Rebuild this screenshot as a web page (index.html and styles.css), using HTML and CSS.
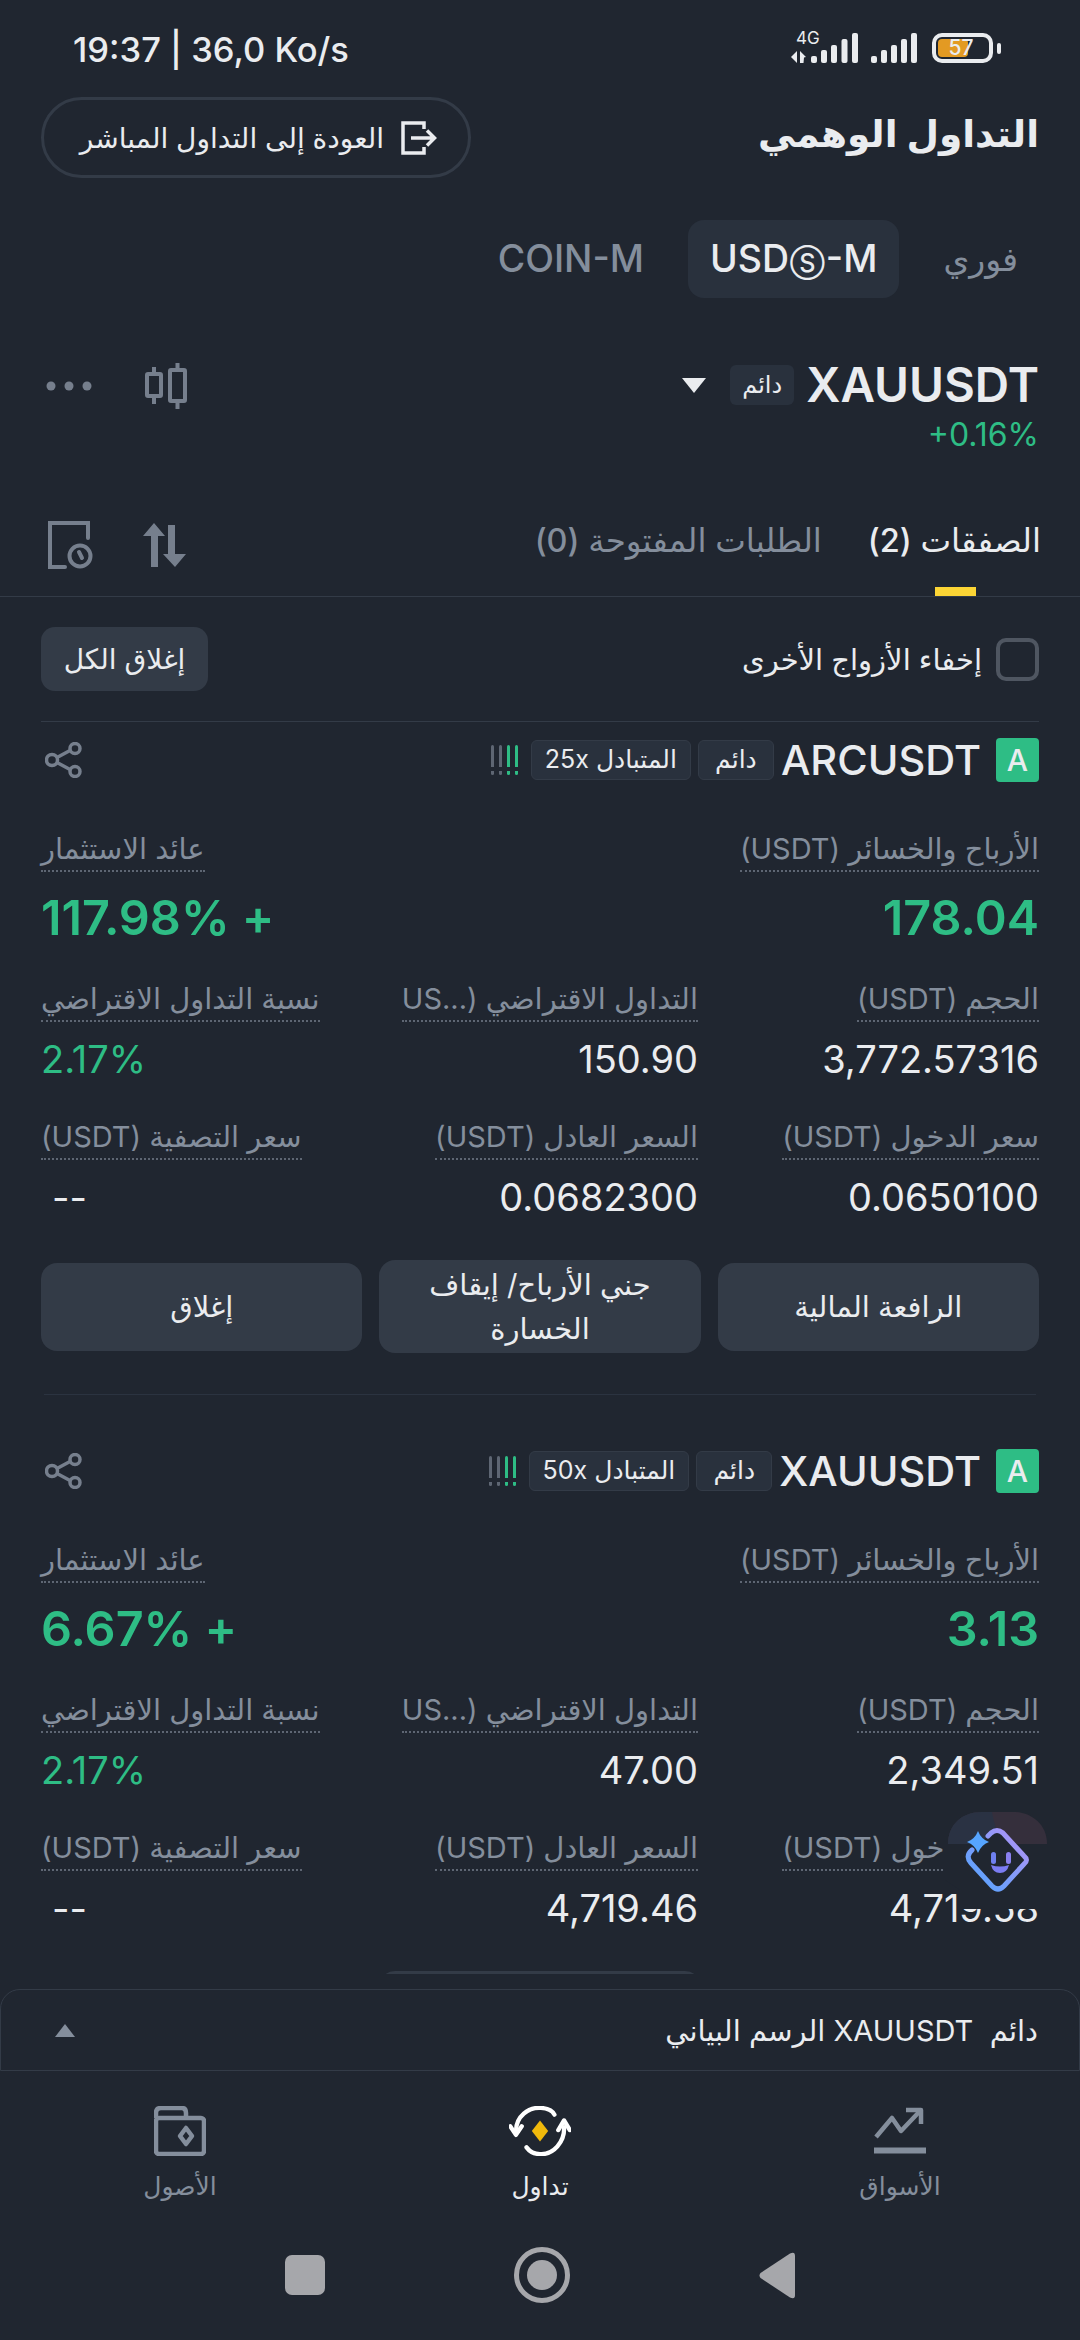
FILE: index.html
```html
<!DOCTYPE html>
<html lang="ar" dir="rtl">
<head>
<meta charset="utf-8">
<title>التداول الوهمي</title>
<link rel="stylesheet" href="styles.css">
</head>
<body>
<div class="page">
  <div class="status" dir="ltr">
    <span class="clock">19:37 | 36,0 Ko/s</span>
    <div class="status-icons">
      <div class="net">
        <span class="net-label">4G</span>
        <svg class="arrows" width="15" height="12" viewBox="0 0 15 12"><path d="M6 0v12L0 6z" fill="#eaecef"/><path d="M9 0l6 6-2 .5-.5 5.500H9z" fill="#eaecef"/></svg>
      </div>
      <svg class="bars" width="47" height="30" viewBox="0 0 47 30"><g fill="#eaecef"><rect x="0" y="23" width="6" height="7" rx="2"/><rect x="10" y="17" width="6" height="13" rx="2"/><rect x="20" y="12" width="6" height="18" rx="2"/><rect x="30.500" y="6" width="6" height="24" rx="2"/><rect x="41" y="0" width="6" height="30" rx="2"/></g></svg>
      <svg class="bars second" width="46" height="30" viewBox="0 0 46 30"><g fill="#eaecef"><rect x="0" y="23" width="6" height="7" rx="2"/><rect x="10" y="17" width="6" height="13" rx="2"/><rect x="20" y="12" width="6" height="18" rx="2"/><rect x="30" y="6" width="6" height="24" rx="2"/><rect x="40" y="0" width="6" height="30" rx="2"/></g></svg>
      <div class="battery">
        <span class="battery-fill"></span>
        <span class="battery-num">57</span>
      </div>
      <span class="battery-tip"></span>
    </div>
  </div>

  <header class="header">
    <h1 class="title">التداول الوهمي</h1>
    <button class="back">
      <svg width="38" height="34" viewBox="0 0 38 34" fill="none" stroke="#eaecef" stroke-width="3.500"><path d="M24 8V2H3v30h21v-6"/><path d="M11 17h23M27 9.500l7.500 7.500-7.500 7.500"/></svg>
      <span>العودة إلى التداول المباشر</span>
    </button>
  </header>

  <nav class="segments">
    <span class="seg seg-ar">فوري</span>
    <span class="seg seg-on" dir="ltr">USD<span class="circled">Ⓢ</span>-M</span>
    <span class="seg" dir="ltr">COIN-M</span>
  </nav>

  <section class="symbol">
    <div class="symbol-main">
      <div class="symbol-line">
        <span class="symbol-name">XAUUSDT</span>
        <span class="symbol-tag">دائم</span>
        <span class="caret"></span>
      </div>
      <span class="symbol-change" dir="ltr">+0.16%</span>
    </div>
    <div class="symbol-tools" dir="ltr">
      <svg width="46" height="10" viewBox="0 0 46 10" fill="#767f8d"><circle cx="5" cy="5" r="4.500"/><circle cx="23" cy="5" r="4.500"/><circle cx="41" cy="5" r="4.500"/></svg>
      <svg width="42" height="46" viewBox="0 0 42 46" fill="none" stroke="#767f8d" stroke-width="4"><rect x="2" y="11" width="14" height="22" rx="1"/><path d="M9 4v7M9 33v8"/><rect x="25" y="7" width="15" height="31" rx="1"/><path d="M32.500 0v7M32.500 38v8"/></svg>
    </div>
  </section>

  <section class="tabs">
    <div class="tab tab-on">الصفقات (2)</div>
    <div class="tab">الطلبات المفتوحة (0)</div>
    <div class="tab-tools" dir="ltr">
      <svg width="45" height="48" viewBox="0 0 45 48" fill="none" stroke="#767f8d" stroke-width="4"><path d="M40 17V2H2v44h15" stroke-linecap="round"/><circle cx="32" cy="35" r="10.500"/><path d="M31 31l3 6" stroke-linecap="round"/></svg>
      <svg width="43" height="44" viewBox="0 0 43 44" fill="#767f8d"><path d="M11 0l11 13h-7v31H8V13H0z"/><path d="M25 2h7v29h11L32 44 20 31h5z"/></svg>
    </div>
  </section>

  <div class="filter">
    <label class="check"><span class="box"></span><span>إخفاء الأزواج الأخرى</span></label>
    <button class="close-all">إغلاق الكل</button>
  </div>

  <div class="scroller">
    <article class="card card-first">
      <div class="card-head">
        <span class="badge">A</span>
        <span class="pair">ARCUSDT</span>
        <span class="tag">دائم</span>
        <span class="tag">المتبادل 25x</span>
        <span class="marks" dir="ltr"><i class="mark"></i><i class="mark"></i><i class="mark mark-on"></i><i class="mark mark-on"></i></span>
        <svg class="share" width="38" height="36" viewBox="0 0 38 36" fill="none" stroke="#767f8d" stroke-width="3.500"><circle cx="7" cy="18" r="5.500"/><circle cx="30" cy="6.500" r="5"/><circle cx="30" cy="29.500" r="5"/><path d="M12 15.500l13-7M12 20.500l13 7"/></svg>
      </div>
      <div class="pnl">
        <div class="metric"><span class="label">الأرباح والخسائر (USDT)</span><span class="big">178.04</span></div>
        <div class="metric metric-end"><span class="label">عائد الاستثمار</span><span class="big">+ 117.98%</span></div>
      </div>
      <div class="grid">
        <div class="metric"><span class="label">الحجم (USDT)</span><span class="value">3,772.57316</span></div>
        <div class="metric"><span class="label">التداول الاقتراضي (...US</span><span class="value">150.90</span></div>
        <div class="metric metric-end"><span class="label">نسبة التداول الاقتراضي</span><span class="value green">2.17%</span></div>
        <div class="metric"><span class="label">سعر الدخول (USDT)</span><span class="value">0.0650100</span></div>
        <div class="metric"><span class="label">السعر العادل (USDT)</span><span class="value">0.0682300</span></div>
        <div class="metric metric-end"><span class="label">سعر التصفية (USDT)</span><span class="value dash">--</span></div>
      </div>
      <div class="actions">
        <button class="action">الرافعة المالية</button>
        <button class="action action-tall">جني الأرباح/ إيقاف الخسارة</button>
        <button class="action">إغلاق</button>
      </div>
    </article>

    <article class="card">
      <div class="card-head">
        <span class="badge">A</span>
        <span class="pair">XAUUSDT</span>
        <span class="tag">دائم</span>
        <span class="tag">المتبادل 50x</span>
        <span class="marks" dir="ltr"><i class="mark"></i><i class="mark"></i><i class="mark mark-on"></i><i class="mark mark-on"></i></span>
        <svg class="share" width="38" height="36" viewBox="0 0 38 36" fill="none" stroke="#767f8d" stroke-width="3.500"><circle cx="7" cy="18" r="5.500"/><circle cx="30" cy="6.500" r="5"/><circle cx="30" cy="29.500" r="5"/><path d="M12 15.500l13-7M12 20.500l13 7"/></svg>
      </div>
      <div class="pnl">
        <div class="metric"><span class="label">الأرباح والخسائر (USDT)</span><span class="big">3.13</span></div>
        <div class="metric metric-end"><span class="label">عائد الاستثمار</span><span class="big">+ 6.67%</span></div>
      </div>
      <div class="grid">
        <div class="metric"><span class="label">الحجم (USDT)</span><span class="value">2,349.51</span></div>
        <div class="metric"><span class="label">التداول الاقتراضي (...US</span><span class="value">47.00</span></div>
        <div class="metric metric-end"><span class="label">نسبة التداول الاقتراضي</span><span class="value green">2.17%</span></div>
        <div class="metric"><span class="label">سعر الدخول (USDT)</span><span class="value">4,719.58</span></div>
        <div class="metric"><span class="label">السعر العادل (USDT)</span><span class="value">4,719.46</span></div>
        <div class="metric metric-end"><span class="label">سعر التصفية (USDT)</span><span class="value dash">--</span></div>
      </div>
      <div class="actions">
        <button class="action"></button>
        <button class="action action-tall"></button>
        <button class="action"></button>
      </div>
    </article>

    <svg class="assistant" width="102" height="97" viewBox="0 0 102 97">
      <defs>
        <linearGradient id="aiStroke" x1="0" y1="1" x2="1" y2="0"><stop offset="0" stop-color="#4fa5ff"/><stop offset="1" stop-color="#b792f5"/></linearGradient>
      </defs>
      <path d="M0 0H102V97H15V78L0 68z" fill="#202630"/>
      <path d="M3 32C3 12 18 0 36 0H68C86 0 102 12 102 32z" fill="#352f3c"/>
      <path d="M3 32C3 12 18 0 36 0H47C49 12 53 24 60 32z" fill="#2a3243"/>
      <path d="M27 38Q20 44 26 51L47 74Q53 80 59 74L79 52Q84 48 79 44L58 21Q52 16 46 21L43 24" fill="#202630" stroke="url(#aiStroke)" stroke-width="5" stroke-linecap="round"/>
      <path d="M33 19Q36 27 44 30Q36 33 33 41Q30 33 22 30Q30 27 33 19z" fill="#56a5ff"/>
      <rect x="46" y="40" width="5" height="12" rx="2.500" fill="#6f80f0"/>
      <rect x="61" y="40" width="5" height="12" rx="2.500" fill="#8a80f0"/>
      <path d="M46 53Q55 56 64 53Q62 61 55 61Q48 61 46 53z" fill="#7b7cf2"/>
    </svg>
  </div>

  <div class="sheet">
    <span class="sheet-title">دائم&nbsp; XAUUSDT الرسم البياني</span>
    <span class="sheet-caret"></span>
  </div>

  <nav class="bottom">
    <div class="item">
      <svg width="52" height="50" viewBox="0 0 52 50" fill="none" stroke="#848e9c" stroke-width="4.500" stroke-linejoin="round"><path d="M1 44.500h50" stroke-width="6" stroke-linecap="round"/><path d="M2 31L18 12l9 13L46 5"/><path d="M32 4h15v14"/></svg>
      <span>الأسواق</span>
    </div>
    <div class="item item-on">
      <svg width="62" height="50" viewBox="0 0 64 52" fill="none" stroke="#fff" stroke-width="4.500" stroke-linecap="round"><path d="M7 26C7 11 20 1 33 2c7 .5 12 3 14 7"/><path d="M57 22c1 15-11 29-25 28-7 0-11-3-14-7"/><path d="M1 21l6 9 6-9M51 25l6-10 6 10" stroke-linejoin="round"/><path d="M32 15l8.500 11L32 37l-8.500-11z" fill="#f0b90b" stroke="none"/></svg>
      <span>تداول</span>
    </div>
    <div class="item">
      <svg width="52" height="50" viewBox="0 0 52 50" fill="none" stroke="#848e9c" stroke-width="4.500" stroke-linejoin="round"><path d="M2 12V7q0-5 5-5h21q4 0 4 5v5"/><rect x="2" y="12" width="48" height="36" rx="3"/><path d="M32 22l6 8-6 8-6-8z"/></svg>
      <span>الأصول</span>
    </div>
  </nav>

  <div class="sysnav" dir="ltr">
    <span class="sys-square"></span>
    <svg width="56" height="56" viewBox="0 0 56 56"><circle cx="28" cy="28" r="25.500" fill="none" stroke="#a6a7ab" stroke-width="5"/><circle cx="28" cy="28" r="15" fill="#a6a7ab"/></svg>
    <svg width="37" height="47" viewBox="0 0 37 47"><path d="M1.500 21L31 1.500Q36 -1 36 4v39q0 5-5 2.500L1.500 26q-2-2.500 0-5z" fill="#a6a7ab"/></svg>
  </div>
</div>
</body>
</html>
```
FILE: styles.css
```css
* { box-sizing: border-box; margin: 0; padding: 0; }
html, body { background: #202630; }
body { font-family: Inter, "Noto Sans", "DejaVu Sans", sans-serif; color: #eaecef; width: 1080px; height: 2340px; overflow: hidden; }
button { font: inherit; color: inherit; background: none; border: 0; }
.page { width: 1080px; height: 2340px; display: flex; flex-direction: column; overflow: hidden; }

.status { height: 97px; display: flex; justify-content: space-between; align-items: flex-start; padding: 28px 79px 0 73px; }
.clock { font-size: 34.500px; line-height: 44px; font-weight: 500; }
.status-icons { display: flex; align-items: flex-end; height: 30px; margin-top: 5px; }
.net { position: relative; width: 20px; height: 30px; display: flex; align-items: flex-end; }
.net-label { position: absolute; left: 5px; top: -5px; font-size: 17px; line-height: 20px; }
.bars.second { margin-left: 13px; }
.battery { position: relative; width: 61px; height: 30px; border: 4px solid #eaecef; border-radius: 10px; margin-left: 15px; display: flex; align-items: center; justify-content: center; }
.battery-fill { position: absolute; left: 2px; top: 2px; bottom: 2px; width: 30px; background: #e39a23; border-radius: 4px; }
.battery-num { position: relative; font-size: 21px; line-height: 22px; font-weight: 500; margin-left: -3px; }
.battery-tip { width: 4px; height: 11px; background: #eaecef; border-radius: 2px; margin: 0 0 9px 4px; }

.header { height: 81px; display: flex; justify-content: space-between; align-items: center; padding: 0 41px; }
.title { font-size: 37.500px; font-weight: 700; line-height: 60px; margin-bottom: 8px; }
.back { width: 430px; height: 81px; border: 3px solid #333b47; border-radius: 41px; display: flex; align-items: center; gap: 16px; padding: 0 30px; font-size: 28px; white-space: nowrap; }

.segments { display: flex; gap: 22px; padding: 0 40px 0 0; margin-top: 42px; height: 78px; }
.seg { padding: 0 22px; font-size: 37.500px; font-weight: 500; line-height: 78px; color: #848e9c; border-radius: 16px; }
.seg-ar { font-size: 33px; }
.seg-on { color: #eaecef; background: #29313d; }
.circled { font-size: 25px; margin: 0 1px; }

.symbol { display: flex; justify-content: space-between; margin-top: 62px; height: 90px; padding: 0 41px; }
.symbol-main { display: flex; flex-direction: column; }
.symbol-line { display: flex; align-items: center; height: 50px; gap: 12px; }
.symbol-name { font-size: 47.500px; font-weight: 600; line-height: 50px; }
.symbol-tag { font-size: 24px; line-height: 40px; height: 40px; padding: 0 12px; background: #29313d; border-radius: 6px; }
.caret { width: 0; height: 0; border-left: 12px solid transparent; border-right: 12px solid transparent; border-top: 15px solid #eaecef; margin-right: 12px; }
.symbol-change { font-size: 32px; line-height: 36px; color: #2ebd85; align-self: flex-start; margin-top: 7px; }
.symbol-tools { display: flex; align-items: center; gap: 53px; height: 46px; margin-top: 3px; padding-left: 5px; }

.tabs { display: flex; align-items: flex-start; margin-top: 60px; height: 87px; padding: 0 39px 0 41px; border-bottom: 1px solid #333b47; }
.tab { position: relative; font-size: 32.500px; line-height: 48px; color: #848e9c; font-weight: 500; height: 86px; padding-top: 7px; margin-left: 46px; }
.tab-on { color: #eaecef; }
.tab-on::after { content: ""; position: absolute; right: 65px; bottom: 0; width: 41px; height: 9px; background: #fcd535; }
.tab-tools { margin-right: auto; display: flex; align-items: center; gap: 50px; padding: 11px 0 0 7px; }

.filter { display: flex; justify-content: space-between; align-items: center; height: 125px; margin: 0 41px; border-bottom: 1px solid #333b47; }
.check { display: flex; align-items: center; gap: 14px; font-size: 29px; }
.box { width: 43px; height: 43px; border: 4px solid #4f5661; border-radius: 10px; }
.close-all { height: 64px; width: 167px; background: #333b47; border-radius: 14px; font-size: 28px; }

.scroller { position: relative; height: 1252px; flex: none; overflow: hidden; }
.card { padding: 55px 41px 0; }
.card-first { padding-top: 16px; }
.card-head { display: flex; align-items: center; height: 44px; gap: 7px; }
.badge { width: 43px; height: 44px; background: #2ebd85; border-radius: 4px; font-size: 30px; font-weight: 500; line-height: 44px; text-align: center; color: #eaecef; margin-left: 8px; }
.pair { font-size: 41.500px; font-weight: 500; line-height: 44px; }
.tag { height: 40px; min-width: 76px; text-align: center; border: 1.500px solid #333b47; background: #29313d; border-radius: 6px; font-size: 25px; line-height: 37px; padding: 0 13px; white-space: nowrap; }
.marks { display: flex; gap: 5px; margin-right: 6px; height: 30px; }
.mark { display: block; width: 3px; height: 30px; background: linear-gradient(#5e6673 0 22px, transparent 22px 26px, #5e6673 26px); border-radius: 2px; }
.mark-on { background: linear-gradient(#2ebd85 0 22px, transparent 22px 26px, #2ebd85 26px); }
.share { margin-right: auto; margin-left: 4px; }

.metric { display: flex; flex-direction: column; align-items: flex-start; white-space: nowrap; }
.metric-end { align-items: flex-end; }
.metric-end .label { align-self: flex-end; }
.label { font-size: 29px; line-height: 39px; height: 43px; color: #848e9c; border-bottom: 2px dotted #5e6673; }
.pnl { display: flex; justify-content: space-between; margin-top: 47px; }
.big { font-size: 48.500px; line-height: 50px; font-weight: 600; color: #2ebd85; margin-top: 21px; }
.grid { display: grid; grid-template-columns: 341px 340px 317px; row-gap: 36px; margin-top: 36px; }
.value { font-size: 38px; line-height: 44px; margin-top: 15px; }
.green { color: #2ebd85; }
.dash { margin-left: 11px; }
.actions { display: grid; grid-template-columns: repeat(3, 1fr); gap: 17px; align-items: center; margin-top: 41px; height: 93px; }
.action { height: 88px; background: #333b47; border-radius: 16px; font-size: 29px; line-height: 44px; }
.action-tall { height: 93px; padding: 0 30px; }
.card-first .actions { margin-bottom: 41px; }
.card-first + .card { position: relative; }
.card-first + .card::before { content: ""; position: absolute; top: 0; left: 44px; right: 44px; height: 1px; background: #2b3340; }

.assistant { position: absolute; left: 945px; top: 1090px; }

.sheet { display: flex; justify-content: space-between; align-items: center; height: 82px; margin-top: 15px; border: 1px solid #333b47; border-bottom-width: 1.500px; border-radius: 20px 20px 0 0; padding: 0 41px 0 54px; font-size: 29px; }
.sheet-caret { width: 0; height: 0; border-left: 10px solid transparent; border-right: 10px solid transparent; border-bottom: 13px solid #848e9c; }

.bottom { display: grid; grid-template-columns: repeat(3, 1fr); height: 159px; padding-top: 35px; }
.item { display: flex; flex-direction: column; align-items: center; font-size: 25px; color: #848e9c; }
.item span { margin-top: 8px; line-height: 44px; }
.item-on { color: #eaecef; }

.sysnav { display: flex; justify-content: center; align-items: center; gap: 189px; height: 90px; }
.sys-square { width: 40px; height: 40px; background: #a6a7ab; border-radius: 7px; }
```
